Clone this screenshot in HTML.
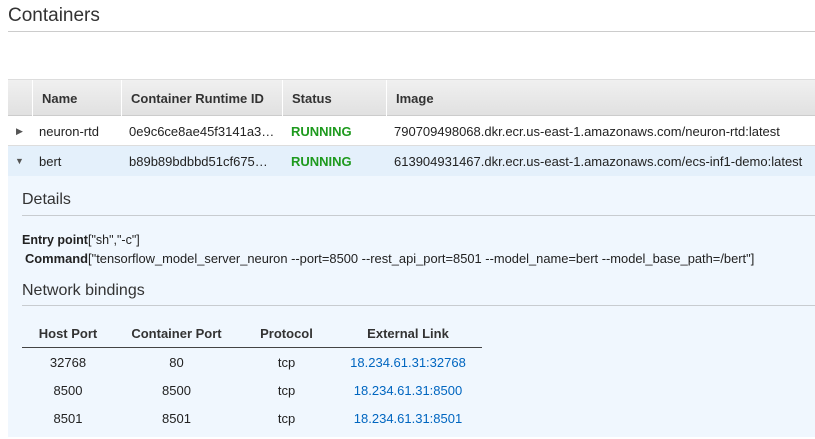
<!DOCTYPE html>
<html><head><style>
body{margin:0;width:815px;height:439px;background:#fff;font-family:"Liberation Sans",Arial,sans-serif;color:#222;position:relative;overflow:hidden}
.a{position:absolute;white-space:nowrap}
h1{position:absolute;left:8px;top:5px;margin:0;font-weight:normal;font-size:19px;color:#333}
.hr{position:absolute;height:1px;background:#ccc}
.hdr{position:absolute;left:8px;top:79px;width:807px;height:37px;background:linear-gradient(#f0f0f0,#e1e1e1);border-top:1px solid #ddd;border-bottom:1px solid #ccc;box-sizing:border-box}
.hdr .c{position:absolute;top:0;height:36px;line-height:37px;font-size:13px;font-weight:bold;color:#333;border-left:1px solid #fff;padding-left:9px;box-sizing:border-box}
.row{position:absolute;left:8px;width:807px;font-size:13px;box-sizing:border-box;border-bottom:1px solid #ddd}
.row span{position:absolute;top:1px}
.g{color:#1e9a1e;font-weight:bold}
.tbl{position:absolute;left:22px;top:316px;width:460px;font-size:13px;text-align:center}
.tbl div{position:absolute;}
a{color:#0066c0;text-decoration:none}
</style></head><body>
<h1>Containers</h1>
<div class="hr" style="left:8px;top:31px;width:807px"></div>
<div class="hdr">
<div class="c" style="left:24px;width:90px">Name</div>
<div class="c" style="left:113px;width:161px">Container Runtime ID</div>
<div class="c" style="left:274px;width:104px">Status</div>
<div class="c" style="left:378px;width:429px">Image</div>
</div>
<div class="row" style="top:116px;height:30px;line-height:29px;background:#fff">
<span style="left:8px;font-size:9px;color:#555">&#9654;</span>
<span style="left:31px">neuron-rtd</span><span style="left:121px">0e9c6ce8ae45f3141a3…</span><span class="g" style="left:283px">RUNNING</span><span style="left:386px">790709498068.dkr.ecr.us-east-1.amazonaws.com/neuron-rtd:latest</span>
</div>
<div class="row" style="top:146px;height:30px;line-height:29px;background:#e4f0fb;border-bottom:none">
<span style="left:7px;font-size:9px;color:#555">&#9660;</span>
<span style="left:31px">bert</span><span style="left:121px">b89b89bdbbd51cf675…</span><span class="g" style="left:283px">RUNNING</span><span style="left:386px">613904931467.dkr.ecr.us-east-1.amazonaws.com/ecs-inf1-demo:latest</span>
</div>
<div style="position:absolute;left:8px;top:176px;width:807px;height:261px;background:#f0f7fe"></div>
<div class="a" style="left:22px;top:191px;font-size:16px;color:#333">Details</div>
<div class="hr" style="left:22px;top:215px;width:793px;background:#c8ccd0"></div>
<div class="a" style="left:22px;top:233px;font-size:12.5px"><b>Entry point</b>["sh","-c"]</div>
<div class="a" style="left:25px;top:251px;font-size:12.9px"><b>Command</b>["tensorflow_model_server_neuron --port=8500 --rest_api_port=8501 --model_name=bert --model_base_path=/bert"]</div>
<div class="a" style="left:22px;top:282px;font-size:16px;color:#333">Network bindings</div>
<div class="hr" style="left:22px;top:305px;width:793px;background:#c8ccd0"></div>
<div class="tbl">
<div style="left:0;width:92px;top:10px;font-weight:bold;color:#333">Host Port</div>
<div style="left:92px;width:125px;top:10px;font-weight:bold;color:#333">Container Port</div>
<div style="left:217px;width:95px;top:10px;font-weight:bold;color:#333">Protocol</div>
<div style="left:312px;width:148px;top:10px;font-weight:bold;color:#333">External Link</div>
<div style="left:0;top:31px;width:460px;height:1px;background:#444"></div>
<div style="left:0;width:92px;top:39px">32768</div><div style="left:92px;width:125px;top:39px">80</div><div style="left:217px;width:95px;top:39px">tcp</div><div style="left:312px;width:148px;top:39px"><a>18.234.61.31:32768</a></div>
<div style="left:0;width:92px;top:67px">8500</div><div style="left:92px;width:125px;top:67px">8500</div><div style="left:217px;width:95px;top:67px">tcp</div><div style="left:312px;width:148px;top:67px"><a>18.234.61.31:8500</a></div>
<div style="left:0;width:92px;top:95px">8501</div><div style="left:92px;width:125px;top:95px">8501</div><div style="left:217px;width:95px;top:95px">tcp</div><div style="left:312px;width:148px;top:95px"><a>18.234.61.31:8501</a></div>
</div>
</body></html>
